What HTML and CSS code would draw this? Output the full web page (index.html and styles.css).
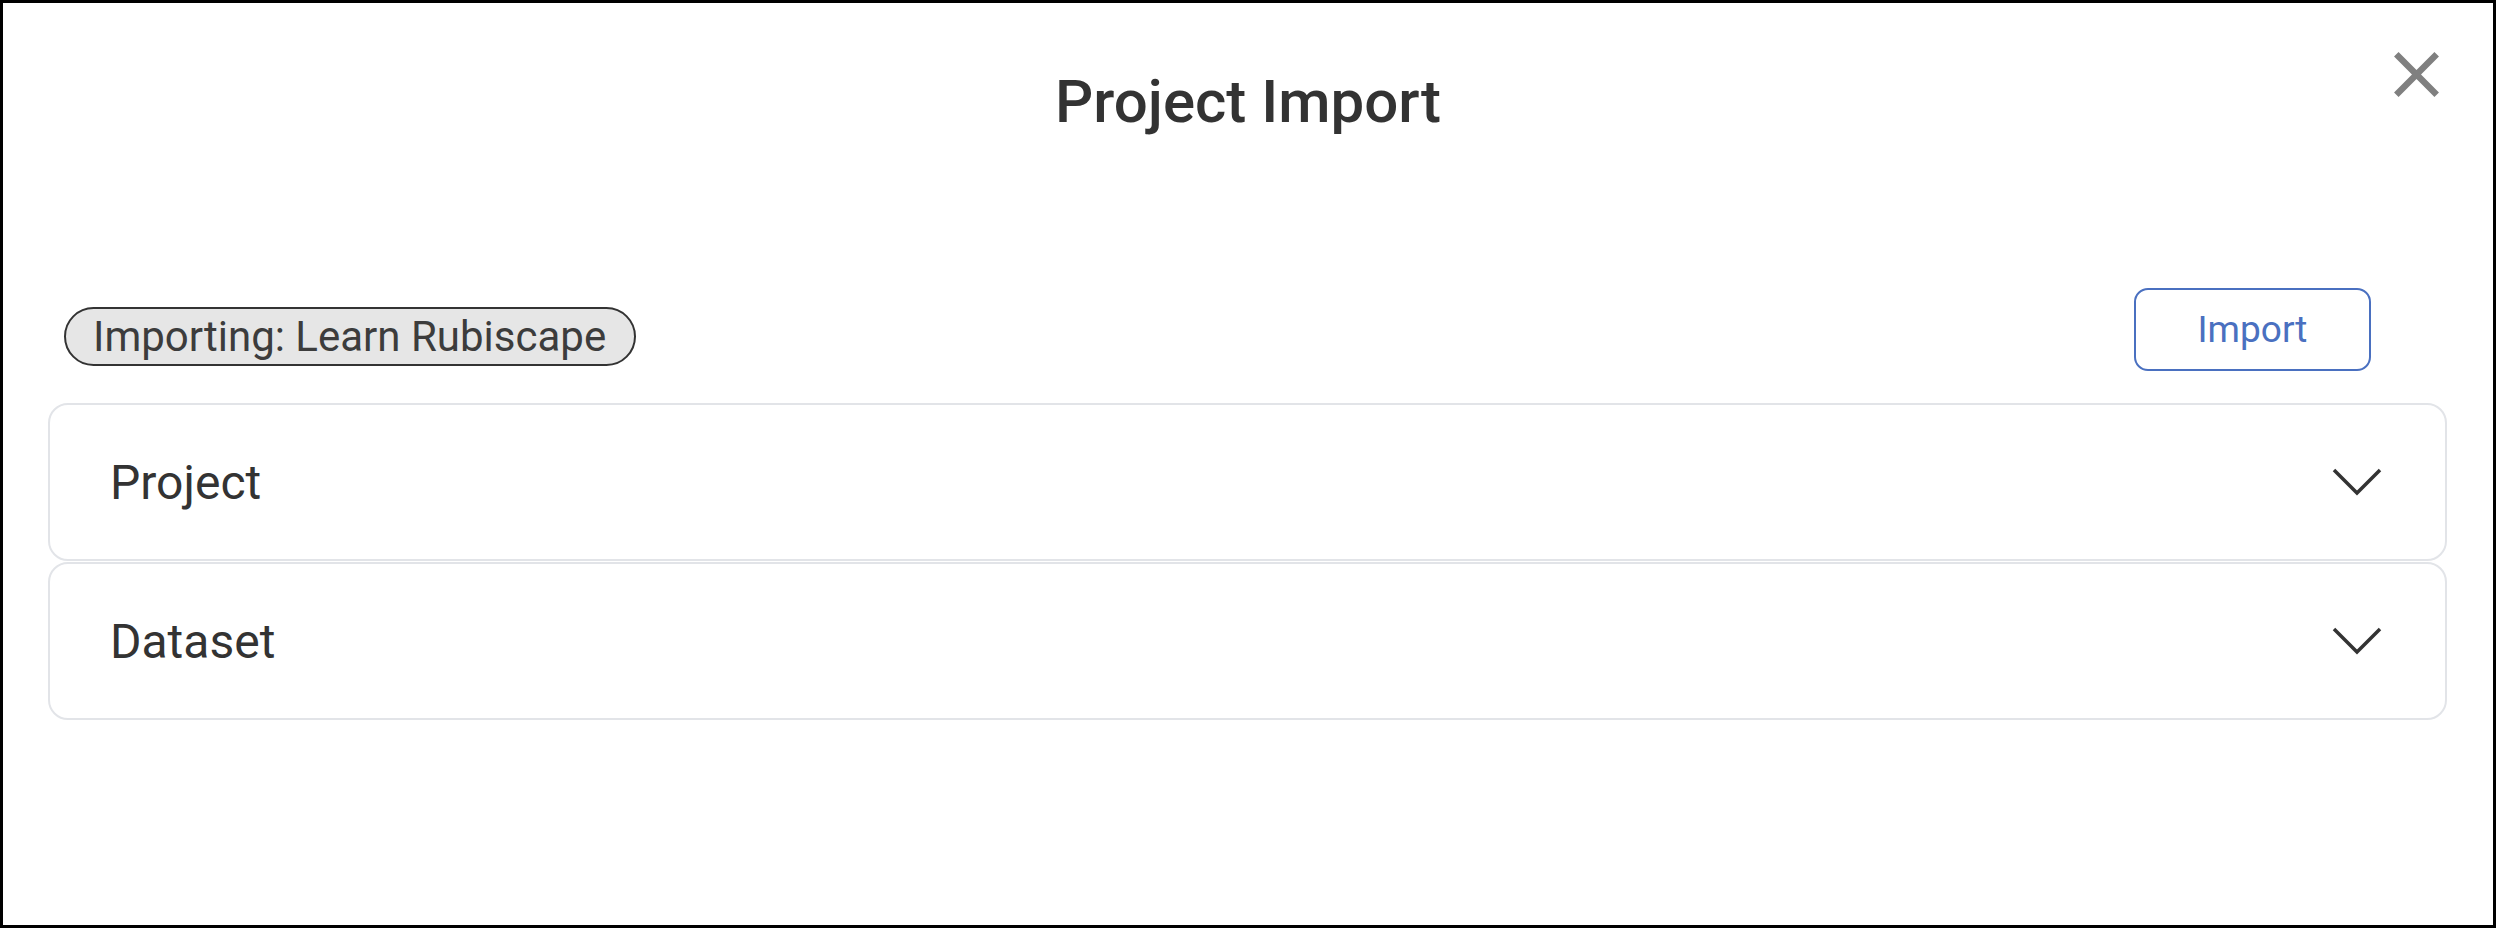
FILE: index.html
```html
<!DOCTYPE html>
<html lang="en">
<head>
<meta charset="utf-8">
<title>Project Import</title>
<link rel="stylesheet" href="styles.css">
</head>
<body>
<div class="dialog">
  <header class="dialog-header">
    <h1 class="dialog-title">Project Import</h1>
    <button class="close-btn" aria-label="Close">
      <svg viewBox="0 0 24 24" width="77" height="77"><path d="M19 6.41L17.59 5 12 10.59 6.41 5 5 6.41 10.59 12 5 17.59 6.41 19 12 13.41 17.59 19 19 17.59 13.41 12z"/></svg>
    </button>
  </header>
  <div class="toolbar">
    <span class="chip">Importing: Learn Rubiscape</span>
    <button class="import-btn">Import</button>
  </div>
  <div class="accordion">
    <div class="acc-item">
      <span class="acc-label">Project</span>
      <svg class="chev" viewBox="0 0 50 28" width="50" height="28"><polyline points="2,2 25,25 48,2"/></svg>
    </div>
    <div class="acc-item">
      <span class="acc-label">Dataset</span>
      <svg class="chev" viewBox="0 0 50 28" width="50" height="28"><polyline points="2,2 25,25 48,2"/></svg>
    </div>
  </div>
</div>
</body>
</html>
```

FILE: styles.css
```css
* { box-sizing: border-box; }
html, body { margin: 0; padding: 0; background: #fff; }
body { font-family: Roboto, "Liberation Sans", Arial, sans-serif; color: #333; }

.dialog {
  position: relative;
  height: 928px;
  border: 3px solid #000;
  background: #fff;
}

.dialog-header {
  padding-top: 64px;
  display: flex;
  justify-content: center;
}
.dialog-title {
  margin: 0;
  font-size: 60px;
  line-height: 70px;
  font-weight: 500;
  color: #333;
}
.close-btn {
  position: absolute;
  top: 33px;
  right: 38px;
  width: 77px;
  height: 77px;
  padding: 0;
  border: 0;
  background: none;
  fill: #808080;
  cursor: pointer;
}
.close-btn svg { display: block; }

.toolbar {
  margin-top: 151px;
  display: flex;
  justify-content: space-between;
  align-items: flex-start;
  padding: 0 122px 0 61px;
}
.chip {
  margin-top: 19px;
  height: 59px;
  display: inline-flex;
  align-items: center;
  padding: 0 28px 0 27px;
  border: 2px solid #333;
  border-radius: 30px;
  background: #e6e6e6;
  font-size: 42px;
  color: #3c3c3c;
}
.import-btn {
  width: 237px;
  height: 83px;
  border: 2px solid #4a70c0;
  border-radius: 14px;
  background: #fff;
  color: #4a70c0;
  font-family: Roboto, "Liberation Sans", Arial, sans-serif;
  font-size: 37px;
  cursor: pointer;
}

.accordion {
  margin: 32px 46px 0 45px;
  display: flex;
  flex-direction: column;
  gap: 1px;
}
.acc-item {
  height: 158px;
  display: flex;
  align-items: center;
  justify-content: space-between;
  padding: 0 63px 0 60px;
  border: 2px solid #e2e4e8;
  border-radius: 20px;
  background: #fff;
}
.acc-label {
  font-size: 48px;
  color: #333;
}
.chev { display: block; }
.chev polyline {
  fill: none;
  stroke: #333;
  stroke-width: 3.5;
}
```
